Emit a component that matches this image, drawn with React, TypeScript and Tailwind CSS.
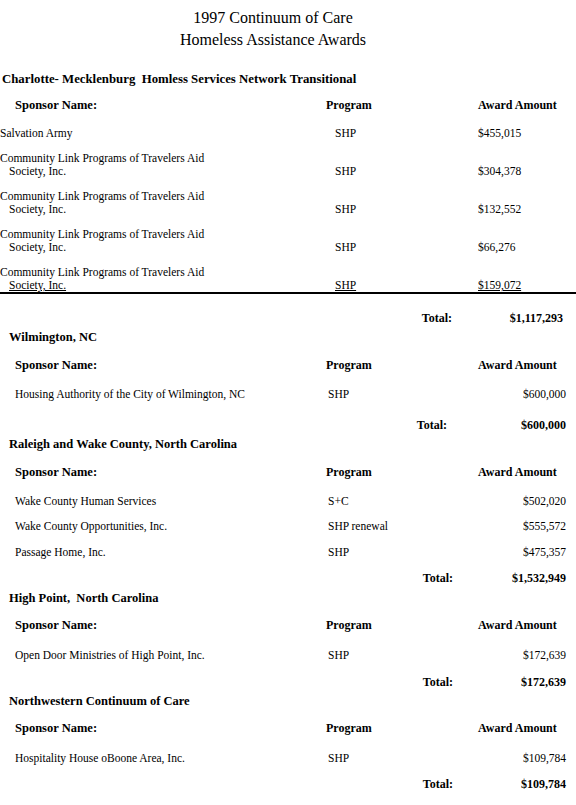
const firstRows = [
  { name: "Salvation Army", program: "SHP", amount: "$455,015" },
  { name: "Community Link Programs of Travelers Aid", second: "Society, Inc.", program: "SHP", amount: "$304,378" },
  { name: "Community Link Programs of Travelers Aid", second: "Society, Inc.", program: "SHP", amount: "$132,552" },
  { name: "Community Link Programs of Travelers Aid", second: "Society, Inc.", program: "SHP", amount: "$66,276" },
  { name: "Community Link Programs of Travelers Aid", second: "Society, Inc.", program: "SHP", amount: "$159,072" },
];

type Row = { name: string; program: string; amount: string; mt: string };

type SectionData = {
  title: string;
  headingMt: string;
  headerMt: string;
  rows: Row[];
  total: string;
  totalMt: string;
  narrowTotal?: boolean;
};

const sections: SectionData[] = [
  {
    title: "Wilmington, NC",
    headingMt: "mt-[3px]",
    headerMt: "mt-[12px]",
    rows: [{ name: "Housing Authority of the City of Wilmington, NC", program: "SHP", amount: "$600,000", mt: "mt-[14px]" }],
    total: "$600,000",
    totalMt: "mt-[16px]",
    narrowTotal: true,
  },
  {
    title: "Raleigh and Wake County, North Carolina",
    headingMt: "mt-[3px]",
    headerMt: "mt-[12px]",
    rows: [
      { name: "Wake County Human Services", program: "S+C", amount: "$502,020", mt: "mt-[14px]" },
      { name: "Wake County Opportunities, Inc.", program: "SHP renewal", amount: "$555,572", mt: "mt-[11px]" },
      { name: "Passage Home, Inc.", program: "SHP", amount: "$475,357", mt: "mt-[12px]" },
    ],
    total: "$1,532,949",
    totalMt: "mt-[11px]",
  },
  {
    title: "High Point,  North Carolina",
    headingMt: "mt-[4px]",
    headerMt: "mt-[11px]",
    rows: [{ name: "Open Door Ministries of High Point, Inc.", program: "SHP", amount: "$172,639", mt: "mt-[15px]" }],
    total: "$172,639",
    totalMt: "mt-[12px]",
  },
  {
    title: "Northwestern Continuum of Care",
    headingMt: "mt-[3px]",
    headerMt: "mt-[11px]",
    rows: [{ name: "Hospitality House oBoone Area, Inc.", program: "SHP", amount: "$109,784", mt: "mt-[15px]" }],
    total: "$109,784",
    totalMt: "mt-[11px]",
  },
];

function Header() {
  return (
    <div className="flex h-[16px] items-center text-[12px] font-bold leading-[16px]">
      <div className="w-[326px] pl-[15px] text-[12.5px]">Sponsor Name:</div>
      <div className="w-[152px]">Program</div>
      <div>Award Amount</div>
    </div>
  );
}

function Section({ title, headingMt, headerMt, rows, total, totalMt, narrowTotal }: SectionData) {
  return (
    <div>
      <div className={`${headingMt} h-[16px] whitespace-pre pl-[9px] text-[12.5px] font-bold leading-[16px]`}>
        {title}
      </div>
      <div className={headerMt}>
        <Header />
      </div>
      {rows.map((r) => (
        <div key={r.name} className={`flex h-[14px] text-[11.5px] leading-[14px] ${r.mt}`}>
          <div className="w-[328px] pl-[15px]">{r.name}</div>
          <div className="w-[150px]">{r.program}</div>
          <div className="w-[88px] text-right">{r.amount}</div>
        </div>
      ))}
      <div className={`flex h-[16px] text-[12px] font-bold leading-[16px] ${totalMt}`}>
        <div className={narrowTotal ? "w-[447px] text-right" : "w-[453px] text-right"}>Total:</div>
        <div className={narrowTotal ? "w-[119px] text-right" : "w-[113px] text-right"}>{total}</div>
      </div>
    </div>
  );
}

export default function App() {
  return (
    <div className="min-h-[805px] w-[576px] bg-white pt-[7px] font-['Liberation_Serif','Times_New_Roman',serif] text-black">
      <div className="pr-[30px] text-center text-[16px] leading-[22px]">
        <div>1997 Continuum of Care</div>
        <div>Homeless Assistance Awards</div>
      </div>

      <div className="mt-[20px] h-[16px] whitespace-pre pl-[2px] text-[12.8px] font-bold leading-[16px]">
        Charlotte- Mecklenburg  Homless Services Network Transitional
      </div>
      <div className="mt-[10px]">
        <Header />
      </div>

      <div className="border-b-2 border-black">
        {firstRows.map((r, i) => {
          const last = i === firstRows.length - 1;
          return (
            <div
              key={i}
              className={`flex items-end text-[11.5px] ${r.second ? "leading-[13px]" : "leading-[14px]"} ${
                i === 0 ? "mt-[13px]" : "mt-[12px]"
              }`}
            >
              <div className="w-[335px]">
                <div>{r.name}</div>
                {r.second && <div className={`pl-[9px] ${last ? "underline" : ""}`}>{r.second}</div>}
              </div>
              <div className={`w-[143px] ${last ? "underline" : ""}`}>{r.program}</div>
              <div className={last ? "underline" : ""}>{r.amount}</div>
            </div>
          );
        })}
      </div>

      <div className="mt-[16px] flex h-[16px] text-[12px] font-bold leading-[16px]">
        <div className="w-[452px] text-right">Total:</div>
        <div className="w-[111px] text-right">$1,117,293</div>
      </div>

      {sections.map((s) => (
        <Section key={s.title} {...s} />
      ))}
    </div>
  );
}
